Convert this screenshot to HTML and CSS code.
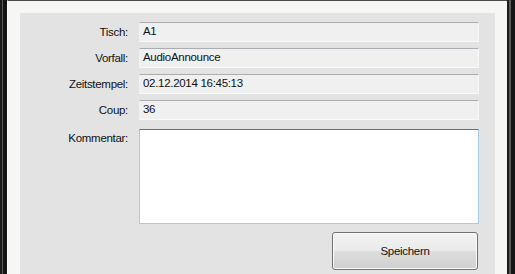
FILE: index.html
```html
<!DOCTYPE html>
<html lang="de">
<head>
<meta charset="utf-8">
<title>Vorfall</title>
<link rel="stylesheet" href="styles.css">
</head>
<body>
<div class="window">
  <div class="frame frame-left"></div>
  <div class="client">
    <div class="panel">
      <div class="form">
        <label class="label">Tisch:</label>
        <div class="field">A1</div>
        <label class="label">Vorfall:</label>
        <div class="field">AudioAnnounce</div>
        <label class="label">Zeitstempel:</label>
        <div class="field">02.12.2014 16:45:13</div>
        <label class="label">Coup:</label>
        <div class="field">36</div>
        <label class="label label-top">Kommentar:</label>
        <div class="memo"></div>
      </div>
      <div class="actions">
        <button class="btn" type="button">Speichern</button>
      </div>
    </div>
  </div>
  <div class="frame frame-right"></div>
</div>
</body>
</html>
```

FILE: styles.css
```css
html, body {
  margin: 0;
  padding: 0;
}

body {
  width: 515px;
  height: 274px;
  overflow: hidden;
  font-family: "Liberation Sans", Arial, sans-serif;
  font-size: 11.5px;
  letter-spacing: -0.3px;
  color: #111;
  background: #000;
}

.window {
  display: flex;
  width: 515px;
  height: 274px;
}

.frame {
  flex: none;
}

.frame-left {
  width: 7px;
  background: linear-gradient(to right, #1c1c1c 0, #1c1c1c 2px, #5a5a5a 2px, #5a5a5a 3px, #151515 3px, #151515 7px);
}

.frame-right {
  width: 8px;
  background: linear-gradient(to right, #1a1a1a 0, #1a1a1a 2px, #5c5c5c 2px, #5c5c5c 4px, #151515 4px, #151515 8px);
}

.client {
  flex: 1;
  display: flex;
  flex-direction: column;
  background: #f6f6f5;
  border-top: 1px solid #4a4a4a;
  border-left: 1px solid #fdfdfd;
  padding: 12px 12px 0 12px;
}

.panel {
  flex: 1;
  background: #e3e3e3;
  padding: 9px 16px 0 0;
  display: flex;
  flex-direction: column;
}

.form {
  display: grid;
  grid-template-columns: 108px 340px;
  column-gap: 11px;
  row-gap: 6px;
  align-items: center;
}

.label {
  text-align: right;
  white-space: nowrap;
  line-height: 20px;
}

.label-top {
  align-self: start;
  line-height: 14px;
  padding-top: 5px;
}

.field {
  box-sizing: border-box;
  height: 20px;
  line-height: 17px;
  padding: 0 3px;
  background: #f0f0f0;
  border: 1px solid #f9f9f9;
  border-top-color: #abadb3;
  border-left-color: #f2f2f2;
  white-space: nowrap;
  overflow: hidden;
}

.memo {
  box-sizing: border-box;
  height: 95px;
  margin-top: 3px;
  background: #fff;
  border: 1px solid #a6cbe8;
  border-top-color: #3d7bad;
}

.actions {
  display: flex;
  justify-content: flex-end;
  padding-top: 8px;
  padding-right: 1px;
}

.btn {
  box-sizing: border-box;
  width: 146px;
  height: 38px;
  border: 1px solid #707070;
  border-radius: 3px;
  background: linear-gradient(to bottom, #f2f2f2 0%, #ebebeb 48%, #dddddd 52%, #cfcfcf 100%);
  box-shadow: inset 0 0 0 1px #fbfbfb;
  font-family: "Liberation Sans", Arial, sans-serif;
  font-size: 11.5px;
  letter-spacing: -0.3px;
  color: #111;
  padding: 0;
}
```
